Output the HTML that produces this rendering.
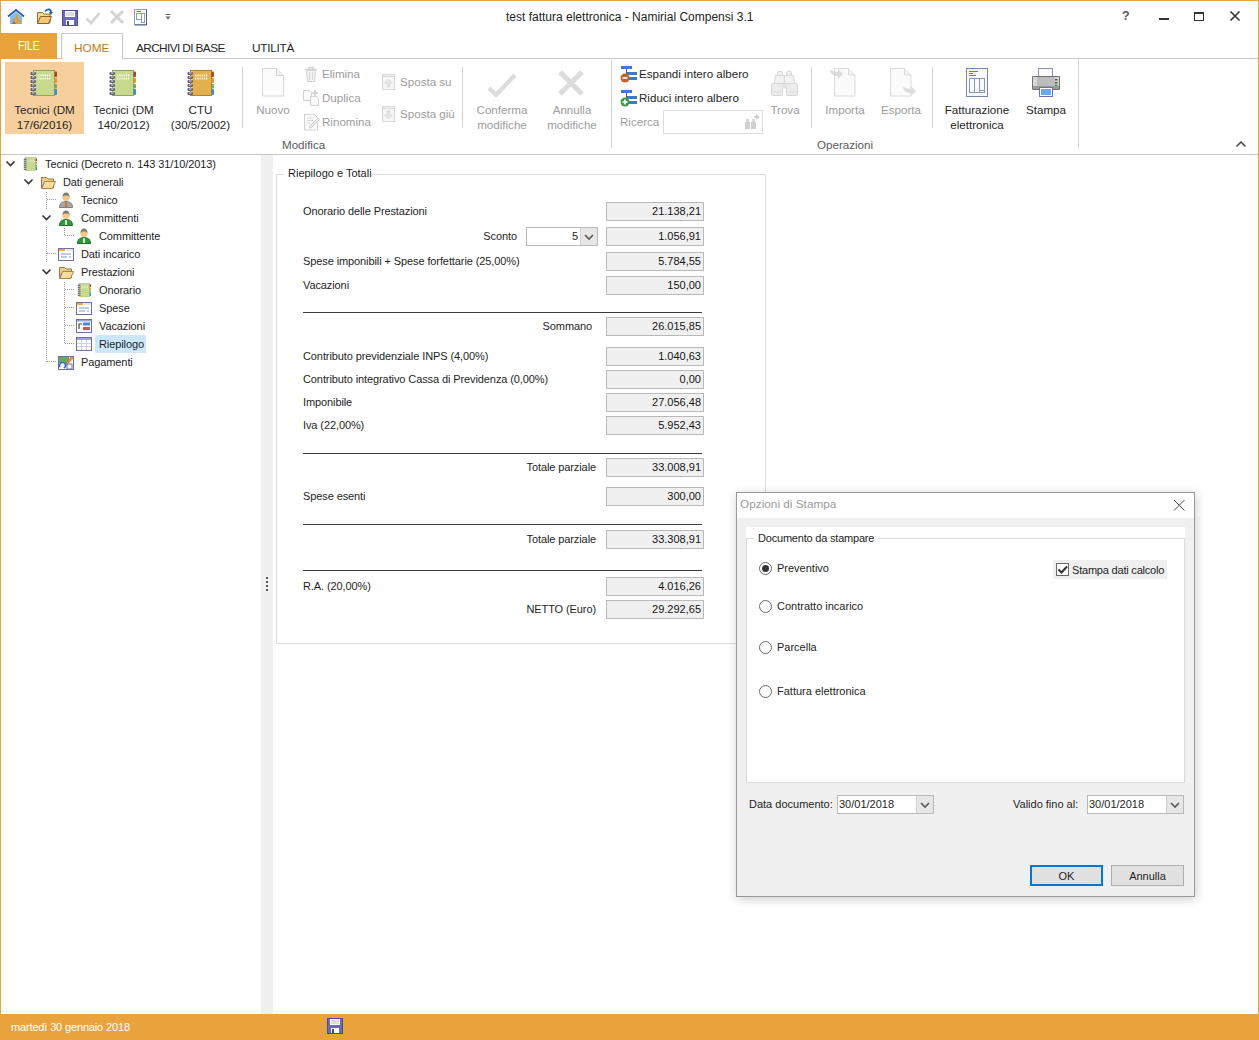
<!DOCTYPE html>
<html><head><meta charset="utf-8">
<style>
*{margin:0;padding:0;box-sizing:border-box}
html,body{width:1259px;height:1040px;overflow:hidden;background:#fff}
body{position:relative;font-family:"Liberation Sans",sans-serif;font-size:11px;color:#1e1e1e}
.a{position:absolute}
.t{position:absolute;white-space:nowrap;line-height:1}
.c{text-align:center}
.r{text-align:right}
.g{color:#a0a0a0}
.rb{font-size:11.6px;color:#262626}
.rb.g{color:#9c9c9c}
.sep{position:absolute;width:1px;background:#d2d2d2}
.fld{position:absolute;left:606px;width:98px;height:19px;background:#f0f0f0;border:1px solid #b9b9b9}
.fld span{position:absolute;right:2px;top:3px;line-height:1;font-size:11px;color:#141414}
.lbl{position:absolute;left:303px;letter-spacing:-0.1px;line-height:1;white-space:nowrap;color:#1e1e1e}
.hl{position:absolute;left:303px;width:399px;height:1px;background:#3c3c3c}
svg{position:absolute;overflow:visible}
</style></head>
<body>
<svg width="0" height="0" style="position:absolute;left:0;top:0">
<defs>
<symbol id="nb" viewBox="0 0 32 32">
<rect x="6.5" y="3.5" width="21" height="25" fill="var(--f)" stroke="var(--s)"/>
<rect x="7" y="4" width="2" height="24" fill="var(--h)"/>
<rect x="27.5" y="4.5" width="2.5" height="5.5" rx="1" fill="#b0402e"/>
<rect x="27.5" y="11" width="2.5" height="5" rx="1" fill="#e39a2a"/>
<rect x="27.5" y="17" width="2.5" height="4.5" rx="1" fill="#72b050"/>
<rect x="27.5" y="22" width="2.5" height="6" rx="1" fill="#3a8ad8"/>
<g fill="#606070"><rect x="3.5" y="5" width="5.5" height="3" rx="1"/><rect x="3.5" y="9" width="5.5" height="3" rx="1"/><rect x="3.5" y="13" width="5.5" height="3" rx="1"/><rect x="3.5" y="17" width="5.5" height="3" rx="1"/><rect x="3.5" y="21" width="5.5" height="3" rx="1"/><rect x="3.5" y="25" width="5.5" height="3" rx="1"/></g><g fill="#e8e8f0"><rect x="5" y="5.5" width="2.5" height="1"/><rect x="5" y="9.5" width="2.5" height="1"/><rect x="5" y="13.5" width="2.5" height="1"/><rect x="5" y="17.5" width="2.5" height="1"/><rect x="5" y="21.5" width="2.5" height="1"/><rect x="5" y="25.5" width="2.5" height="1"/></g>
<path d="M11 8.5h13M11 11.5h13" stroke="#fff" stroke-width="1.8" stroke-dasharray="1.3 0.9" opacity="0.9"/><path d="M11 10h14" stroke="#9fb070" stroke-width="0.8" stroke-dasharray="1 1" opacity="0.6"/>
</symbol>
<symbol id="fold" viewBox="0 0 16 16">
<path d="M1.5 3.5h5l1.5 1.5h5.5v9h-12z" fill="#e9cd8e" stroke="#9b7b3c"/>
<path d="M1.5 14.5l3-7h11l-3 7z" fill="#f7dc9c" stroke="#a88440"/>
<path d="M4 9l-2 5" stroke="#8a6cc0" stroke-width="0.8"/>
</symbol>
<symbol id="pers" viewBox="0 0 16 16">
<path d="M1.5 15.5c0-4 2.5-6 6.5-6s6.5 2 6.5 6z" fill="var(--b)" stroke="var(--bs)"/>
<circle cx="8" cy="5.5" r="3.5" fill="#f3c886"/>
<path d="M4.4 5.2c0-3 1.5-4.7 3.6-4.7s3.6 1.7 3.6 4.7c-0.6-1.2-1.4-1.8-3.6-1.8s-3 0.6-3.6 1.8z" fill="#7a7a7a"/>
<path d="M8 10v5" stroke="var(--t)" stroke-width="1.6"/>
</symbol>
<symbol id="form" viewBox="0 0 16 16">
<rect x="0.5" y="2.5" width="15" height="12" fill="#fff" stroke="#6e6ea0"/>
<rect x="1" y="3" width="6" height="2" fill="#f0a830"/>
<path d="M8 3h7v2H8z" fill="#e8e8f4"/>
<path d="M3 8h10M3 11h6M11 11h2" stroke="#7a9ad0" stroke-width="1"/>
</symbol>
<symbol id="grid" viewBox="0 0 16 16">
<rect x="0.5" y="1.5" width="15" height="13" fill="#fff" stroke="#6e6ea0"/>
<rect x="1" y="2" width="14" height="2" fill="#9aa8d8"/>
<path d="M5.5 4v10M10.5 4v10M1 7.5h14M1 10.5h14" stroke="#c8d0ea" stroke-width="1"/>
</symbol>
<symbol id="vac" viewBox="0 0 16 16">
<rect x="0.5" y="1.5" width="15" height="13" fill="#fff" stroke="#6e6ea0"/>
<rect x="1" y="2" width="14" height="1.5" fill="#9aa8d8"/>
<rect x="7" y="4.5" width="7" height="3" fill="#4a8ad8"/>
<rect x="7" y="9" width="7" height="3" fill="#c06050"/>
<path d="M3 11V6h3" stroke="#444" stroke-width="1.2" fill="none"/>
</symbol>
</defs>
</svg>
<!-- window frame -->
<div class="a" style="left:0;top:0;width:1259px;height:1px;background:#e8a33c"></div>
<div class="a" style="left:0;top:0;width:1px;height:1014px;background:#e8a33c"></div>
<div class="a" style="left:1258px;top:0;width:1px;height:1014px;background:#e8a33c"></div>

<!-- title -->
<div class="t" style="left:506px;top:11px;font-size:12px;color:#1e1e1e">test fattura elettronica - Namirial Compensi 3.1</div>

<!-- tabs -->
<div class="a" style="left:0;top:33px;width:57px;height:26px;background:#e8a33c"></div>
<div class="t" style="left:18px;top:40px;font-size:12.8px;color:#fff;transform:scaleX(0.8);transform-origin:0 0">FILE</div>
<div class="a" style="left:61px;top:33px;width:62px;height:26px;border:1px solid #c6c6c6;border-bottom:none;background:#fff"></div>
<div class="a" style="left:57px;top:58px;width:4px;height:1px;background:#c6c6c6"></div>
<div class="a" style="left:123px;top:58px;width:1135px;height:1px;background:#c6c6c6"></div>
<div class="t" style="left:74px;top:43px;font-size:11.8px;color:#c07a1e">HOME</div>
<div class="t" style="left:136px;top:43px;font-size:11.8px;color:#262626;letter-spacing:-0.6px">ARCHIVI DI BASE</div>
<div class="t" style="left:252px;top:43px;font-size:11.8px;color:#262626;letter-spacing:-0.25px">UTILITÀ</div>

<!-- ribbon bottom line -->
<div class="a" style="left:1px;top:154px;width:1257px;height:1px;background:#c6c6c6"></div>

<!-- ribbon: selected button -->
<div class="a" style="left:5px;top:62px;width:79px;height:72px;background:#f6cf9c"></div>

<!-- ribbon texts -->
<div class="t c rb" style="left:4px;width:81px;top:102px;line-height:15px">Tecnici (DM<br>17/6/2016)</div>
<div class="t c rb" style="left:83px;width:81px;top:102px;line-height:15px">Tecnici (DM<br>140/2012)</div>
<div class="t c rb" style="left:160px;width:81px;top:102px;line-height:15px">CTU<br>(30/5/2002)</div>
<div class="t c rb g" style="left:248px;width:50px;top:102px;line-height:15px">Nuovo</div>
<div class="t rb g" style="left:322px;top:68px">Elimina</div>
<div class="t rb g" style="left:322px;top:92px">Duplica</div>
<div class="t rb g" style="left:322px;top:116px">Rinomina</div>
<div class="t rb g" style="left:400px;top:76px">Sposta su</div>
<div class="t rb g" style="left:400px;top:108px">Sposta giù</div>
<div class="t c rb g" style="left:462px;width:80px;top:102px;line-height:15px">Conferma<br>modifiche</div>
<div class="t c rb g" style="left:532px;width:80px;top:102px;line-height:15px">Annulla<br>modifiche</div>
<div class="t rb" style="left:639px;top:68px">Espandi intero albero</div>
<div class="t rb" style="left:639px;top:92px">Riduci intero albero</div>
<div class="t rb g" style="left:620px;top:116px">Ricerca</div>
<div class="a" style="left:663px;top:110px;width:100px;height:24px;border:1px solid #dcdcdc;background:#fff"></div>
<div class="t c rb g" style="left:760px;width:50px;top:102px;line-height:15px">Trova</div>
<div class="t c rb g" style="left:815px;width:60px;top:102px;line-height:15px">Importa</div>
<div class="t c rb g" style="left:871px;width:60px;top:102px;line-height:15px">Esporta</div>
<div class="t c rb" style="left:937px;width:80px;top:102px;line-height:15px">Fatturazione<br>elettronica</div>
<div class="t c rb" style="left:1016px;width:60px;top:102px;line-height:15px">Stampa</div>
<div class="t rb" style="left:282px;top:139px;color:#5a5a5a">Modifica</div>
<div class="t rb" style="left:817px;top:139px;color:#5a5a5a">Operazioni</div>

<!-- separators -->
<div class="sep" style="left:242px;top:67px;height:61px"></div>
<div class="sep" style="left:462px;top:67px;height:61px"></div>
<div class="sep" style="left:611px;top:60px;height:88px"></div>
<div class="sep" style="left:811px;top:67px;height:61px"></div>
<div class="sep" style="left:932px;top:67px;height:61px"></div>
<div class="sep" style="left:1078px;top:60px;height:88px"></div>

<!-- splitter -->
<div class="a" style="left:261px;top:155px;width:12px;height:859px;background:#f0f0f0"></div>
<div class="a" style="left:266px;top:577px;width:2px;height:2px;background:#555"></div>
<div class="a" style="left:266px;top:581px;width:2px;height:2px;background:#555"></div>
<div class="a" style="left:266px;top:585px;width:2px;height:2px;background:#555"></div>
<div class="a" style="left:266px;top:589px;width:2px;height:2px;background:#555"></div>

<!-- TREE -->
<div id="tree" style="letter-spacing:-0.1px">
<div class="a" style="left:95px;top:335px;width:51px;height:18px;background:#cce8ff"></div>
<div class="t" style="left:45px;top:159px">Tecnici (Decreto n. 143 31/10/2013)</div>
<div class="t" style="left:63px;top:177px">Dati generali</div>
<div class="t" style="left:81px;top:195px">Tecnico</div>
<div class="t" style="left:81px;top:213px">Committenti</div>
<div class="t" style="left:99px;top:231px">Committente</div>
<div class="t" style="left:81px;top:249px">Dati incarico</div>
<div class="t" style="left:81px;top:267px">Prestazioni</div>
<div class="t" style="left:99px;top:285px">Onorario</div>
<div class="t" style="left:99px;top:303px">Spese</div>
<div class="t" style="left:99px;top:321px">Vacazioni</div>
<div class="t" style="left:99px;top:339px">Riepilogo</div>
<div class="t" style="left:81px;top:357px">Pagamenti</div>
<svg width="260" height="220" style="left:0;top:155px" viewBox="0 155 260 220">
<g fill="none" stroke="#333" stroke-width="1.6">
<path d="M6.5 161.5l4 4 4-4"/>
<path d="M24.5 179.5l4 4 4-4"/>
<path d="M42.5 215.5l4 4 4-4"/>
<path d="M42.5 269.5l4 4 4-4"/>
</g>
<g fill="none" stroke="#9a9a9a" stroke-width="1" stroke-dasharray="1 1">
<path d="M46.5 192v17M46.5 227v36M46.5 281v81M47 199.5h10M47 253.5h10M47 361.5h10"/>
<path d="M64.5 228v8M65 235.5h10"/>
<path d="M64.5 282v62M65 289.5h10M65 307.5h10M65 325.5h10M65 343.5h10"/>
</g>
</svg>
</div>

<!-- CONTENT groupbox -->
<div class="a" style="left:276px;top:174px;width:490px;height:470px;border:1px solid #dcdcdc"></div>
<div class="a" style="left:284px;top:170px;width:88px;height:10px;background:#fff"></div>
<div class="t" style="left:288px;top:168px">Riepilogo e Totali</div>

<div id="content">
<div class="lbl" style="top:206px">Onorario delle Prestazioni</div>
<div class="fld" style="top:202px"><span>21.138,21</span></div>
<div class="lbl r" style="left:auto;right:742px;top:231px">Sconto</div>
<div class="fld" style="top:227px"><span>1.056,91</span></div>
<div class="lbl" style="top:256px">Spese imponibili + Spese forfettarie (25,00%)</div>
<div class="fld" style="top:252px"><span>5.784,55</span></div>
<div class="lbl" style="top:280px">Vacazioni</div>
<div class="fld" style="top:276px"><span>150,00</span></div>
<div class="lbl r" style="left:auto;right:667px;top:321px">Sommano</div>
<div class="fld" style="top:317px"><span>26.015,85</span></div>
<div class="lbl" style="top:351px">Contributo previdenziale INPS (4,00%)</div>
<div class="fld" style="top:347px"><span>1.040,63</span></div>
<div class="lbl" style="top:374px">Contributo integrativo Cassa di Previdenza (0,00%)</div>
<div class="fld" style="top:370px"><span>0,00</span></div>
<div class="lbl" style="top:397px">Imponibile</div>
<div class="fld" style="top:393px"><span>27.056,48</span></div>
<div class="lbl" style="top:420px">Iva (22,00%)</div>
<div class="fld" style="top:416px"><span>5.952,43</span></div>
<div class="lbl r" style="left:auto;right:663px;top:462px">Totale parziale</div>
<div class="fld" style="top:458px"><span>33.008,91</span></div>
<div class="lbl" style="top:491px">Spese esenti</div>
<div class="fld" style="top:487px"><span>300,00</span></div>
<div class="lbl r" style="left:auto;right:663px;top:534px">Totale parziale</div>
<div class="fld" style="top:530px"><span>33.308,91</span></div>
<div class="lbl" style="top:581px">R.A. (20,00%)</div>
<div class="fld" style="top:577px"><span>4.016,26</span></div>
<div class="lbl r" style="left:auto;right:663px;top:604px">NETTO (Euro)</div>
<div class="fld" style="top:600px"><span>29.292,65</span></div>
<div class="hl" style="top:312px"></div>
<div class="hl" style="top:453px"></div>
<div class="hl" style="top:524px"></div>
<div class="hl" style="top:570px"></div>
<div class="a" style="left:526px;top:227px;width:72px;height:19px;border:1px solid #b9b9b9;background:#fff"></div>
<div class="a" style="left:580px;top:228px;width:17px;height:17px;background:#e6e6e6;border-left:1px solid #d0d0d0"></div>
<div class="t" style="left:572px;top:231px">5</div>
<svg width="10" height="8" style="left:584px;top:233px"><path d="M1 2l4 4 4-4" fill="none" stroke="#5a5a5a" stroke-width="1.7"/></svg>
</div>

<!-- status bar -->
<div class="a" style="left:0;top:1014px;width:1259px;height:26px;background:#e8a33c"></div>
<div class="t" style="left:11px;top:1022px;color:#fff;letter-spacing:-0.15px">martedì 30 gennaio 2018</div>

<div id="icons">
<!-- ribbon big notebooks -->
<svg width="32" height="32" style="left:27px;top:67px;--f:#c6d98c;--s:#8ea35e;--h:#d8e8a8"><use href="#nb"/></svg>
<svg width="32" height="32" style="left:106px;top:67px;--f:#c6d98c;--s:#8ea35e;--h:#d8e8a8"><use href="#nb"/></svg>
<svg width="32" height="32" style="left:184px;top:67px;--f:#e4b04c;--s:#b08030;--h:#f0c870"><use href="#nb"/></svg>
<!-- tree icons -->
<svg width="16" height="16" style="left:22px;top:156px;--f:#c6d98c;--s:#8ea35e;--h:#d8e8a8"><use href="#nb"/></svg>
<svg width="16" height="16" style="left:40px;top:174px"><use href="#fold"/></svg>
<svg width="16" height="16" style="left:58px;top:192px;--b:#a8a8a8;--bs:#808080;--t:#d07020"><use href="#pers"/></svg>
<svg width="16" height="16" style="left:58px;top:210px;--b:#2f9a3a;--bs:#1f7028;--t:#fff"><use href="#pers"/></svg>
<svg width="16" height="16" style="left:76px;top:228px;--b:#2f9a3a;--bs:#1f7028;--t:#fff"><use href="#pers"/></svg>
<svg width="16" height="16" style="left:58px;top:246px"><use href="#form"/></svg>
<svg width="16" height="16" style="left:58px;top:264px"><use href="#fold"/></svg>
<svg width="16" height="16" style="left:76px;top:282px;--f:#c6d98c;--s:#8ea35e;--h:#d8e8a8"><use href="#nb"/></svg>
<svg width="16" height="16" style="left:76px;top:300px"><use href="#form"/></svg>
<svg width="16" height="16" style="left:76px;top:318px"><use href="#vac"/></svg>
<svg width="16" height="16" style="left:76px;top:336px"><use href="#grid"/></svg>
<svg width="16" height="16" style="left:58px;top:354px">
<rect x="0.5" y="2.5" width="15" height="13" fill="#fff" stroke="#6e6ea0"/>
<rect x="1" y="3" width="10" height="6" fill="#6aa860"/>
<path d="M7 10l7-8 1.5 1.5-7 8z" fill="#e8a040" stroke="#805020" stroke-width="0.6"/>
<path d="M2 13a3 3 0 1 1 4 1" stroke="#2a70c8" stroke-width="1.6" fill="none"/>
<rect x="9" y="10" width="5" height="5" fill="none" stroke="#6e6ea0"/>
</svg>

<!-- QAT -->
<svg width="18" height="16" style="left:7px;top:9px">
<path d="M1 7.5L9 1l8 6.5" fill="none" stroke="#2a5db0" stroke-width="1.8"/>
<path d="M3 7.5l6-4.8 6 4.8V15H3z" fill="#8ab8e8"/>
<path d="M6 15V9h2v6zM9 15V6h2v9zM12 15v-5h2v5z" fill="#e0a030"/>
<path d="M5 15l2-3 2 3z" fill="#c06020"/>
</svg>
<svg width="18" height="16" style="left:36px;top:8px">
<path d="M1.5 4.5h5l1.5 1.5h6v9h-12.5z" fill="#f0d890" stroke="#8a7040"/>
<path d="M1.5 15.5l3-7h11l-3 7z" fill="#f6c870" stroke="#8a6030"/>
<path d="M9 3.5c2-3 6-3 6 1" fill="none" stroke="#1a60c0" stroke-width="1.6"/>
<path d="M13 4h4l-2 3z" fill="#1a60c0"/>
</svg>
<svg width="16" height="16" style="left:62px;top:10px">
<rect x="0.5" y="0.5" width="15" height="15" fill="#6a6ab8" stroke="#4a4a98"/>
<rect x="3" y="1" width="10" height="6" fill="#fff"/>
<path d="M4 3h8M4 5h8" stroke="#aaa" stroke-width="0.8"/>
<rect x="4" y="10" width="8" height="5" fill="#fff"/>
<rect x="5" y="11" width="2" height="4" fill="#4a4a98"/>
</svg>
<svg width="16" height="14" style="left:85px;top:11px"><path d="M1.5 7.5l4.5 4.5 8.5-10" fill="none" stroke="#d4d4d4" stroke-width="2.6"/></svg>
<svg width="16" height="16" style="left:109px;top:9px"><path d="M2 2l12 12M14 2L2 14" fill="none" stroke="#d4d4d4" stroke-width="3"/></svg>
<svg width="14" height="17" style="left:134px;top:9px">
<rect x="0.5" y="0.5" width="12" height="15" fill="#fff" stroke="#8a9cc4"/>
<path d="M12.5 0.5v15.5H0.5" fill="none" stroke="#4f6474"/>
<path d="M2.5 2.5h4.5" stroke="#2a80d8" stroke-width="1"/>
<rect x="2.5" y="4.5" width="5" height="6" fill="none" stroke="#8a9cc4"/>
<rect x="7.5" y="4.5" width="3" height="9" fill="none" stroke="#8a9cc4"/>
</svg>
<svg width="8" height="8" style="left:164px;top:13px"><path d="M1.5 1.5h5" stroke="#666" stroke-width="1"/><path d="M1.5 3.5h5l-2.5 3z" fill="#666"/></svg>

<!-- title buttons -->
<div class="t" style="left:1122px;top:10px;font-size:12.5px;font-weight:bold;color:#555">?</div>
<div class="a" style="left:1159px;top:18px;width:10px;height:2px;background:#333"></div>
<div class="a" style="left:1194px;top:12px;width:10px;height:9px;border:1px solid #333;border-top-width:2px"></div>
<svg width="12" height="12" style="left:1229px;top:10px"><path d="M1.5 1.5l9 9M10.5 1.5l-9 9" stroke="#333" stroke-width="1.6"/></svg>

<!-- ribbon gray icons -->
<svg width="24" height="30" style="left:262px;top:68px">
<path d="M0.5 0.5h14l7 7v20.5h-21z" fill="#fcfcfc" stroke="#d6d6d6"/>
<path d="M14.5 0.5v7h7" fill="#f0f0f0" stroke="#d6d6d6"/>
</svg>
<svg width="14" height="16" style="left:304px;top:66px">
<path d="M1 3.5h12M5 3V1.5h4V3" fill="none" stroke="#d2d2d2" stroke-width="1.4"/>
<path d="M2.5 4.5h9l-1 11h-7z" fill="#f3f3f3" stroke="#d2d2d2"/>
<path d="M5.5 6v8M8.5 6v8" stroke="#d8d8d8"/>
</svg>
<svg width="16" height="16" style="left:303px;top:90px">
<path d="M0.5 0.5h6l2 2v8h-8z" fill="#fafafa" stroke="#d2d2d2"/>
<path d="M7.5 6.5h6l2 2v7h-8z" fill="#fafafa" stroke="#d2d2d2"/>
<path d="M12 0v6M9 3h6" stroke="#d0d0d0" stroke-width="1.6"/>
</svg>
<svg width="16" height="17" style="left:304px;top:114px">
<path d="M0.5 0.5h10l3 3v12.5h-13z" fill="#fafafa" stroke="#d2d2d2"/>
<path d="M3 4h6M3 6.5h6M3 9h4" stroke="#dadada"/>
<path d="M6 12l8-8 1.5 1.5-8 8-2 .5z" fill="#eee" stroke="#cfcfcf"/>
</svg>
<svg width="14" height="16" style="left:382px;top:74px">
<rect x="0.5" y="0.5" width="12" height="15" fill="#f6f6f6" stroke="#d6d6d6"/>
<path d="M0.5 2.5h12" stroke="#d6d6d6"/>
<path d="M6.5 5l-4 4h2.5v4h3v-4h2.5z" fill="#e6e6e6" stroke="#d4d4d4" stroke-width="0.6"/>
</svg>
<svg width="14" height="16" style="left:382px;top:106px">
<rect x="0.5" y="0.5" width="12" height="15" fill="#f6f6f6" stroke="#d6d6d6"/>
<path d="M0.5 2.5h12" stroke="#d6d6d6"/>
<path d="M6.5 13l-4-4h2.5v-4h3v4h2.5z" fill="#e6e6e6" stroke="#d4d4d4" stroke-width="0.6"/>
</svg>
<svg width="30" height="26" style="left:487px;top:72px"><path d="M2 16l7 7 19-20" fill="none" stroke="#dcdcdc" stroke-width="4.2" stroke-linejoin="round"/></svg>
<svg width="28" height="28" style="left:557px;top:69px"><path d="M3 3l22 22M25 3L3 25" fill="none" stroke="#dcdcdc" stroke-width="5"/></svg>

<!-- espandi / riduci -->
<svg width="17" height="17" style="left:620px;top:66px">
<rect x="1" y="0" width="11" height="3" fill="#3a7cc8"/>
<path d="M6.5 3v5" stroke="#555" stroke-width="1"/>
<rect x="7" y="6" width="10" height="3" fill="#3a7cc8"/>
<rect x="7" y="11" width="10" height="3" fill="#3a7cc8"/>
<circle cx="5" cy="12" r="4.5" fill="#c0642a"/>
<path d="M2.5 12h5" stroke="#fff" stroke-width="1.6"/>
</svg>
<svg width="17" height="17" style="left:620px;top:90px">
<rect x="1" y="0" width="11" height="3" fill="#3a7cc8"/>
<path d="M6.5 3v5" stroke="#555" stroke-width="1"/>
<rect x="7" y="6" width="10" height="3" fill="#3a7cc8"/>
<rect x="7" y="11" width="10" height="3" fill="#3a7cc8"/>
<circle cx="5" cy="12" r="4.5" fill="#3a9a48"/>
<path d="M2.5 12h5M5 9.5v5" stroke="#fff" stroke-width="1.6"/>
</svg>
<!-- search binocs small -->
<svg width="16" height="16" style="left:744px;top:114px">
<path d="M10 3h4M12 1l2.5 2-2.5 2" stroke="#c8c8c8" stroke-width="1.4" fill="none"/>
<rect x="1" y="8" width="5" height="7" fill="#d0d0d0"/><rect x="7" y="8" width="5" height="7" fill="#d0d0d0"/>
<rect x="2" y="5" width="3" height="3" fill="#d8d8d8"/><rect x="8" y="5" width="3" height="3" fill="#d8d8d8"/>
</svg>
<!-- Trova -->
<svg width="28" height="26" style="left:771px;top:71px">
<rect x="0.5" y="12.5" width="11" height="12" rx="1.5" fill="#ececec" stroke="#d8d8d8"/>
<rect x="15.5" y="12.5" width="11" height="12" rx="1.5" fill="#ececec" stroke="#d8d8d8"/>
<rect x="11" y="12.5" width="5" height="5" fill="#e4e4e4"/>
<path d="M3.5 12.5l1-8h9l0.5 8z" fill="#f2f2f2" stroke="#d8d8d8"/>
<path d="M13 12.5l0.5-8h9l1 8z" fill="#f2f2f2" stroke="#d8d8d8"/>
<rect x="6.5" y="0.5" width="5" height="4" rx="1.5" fill="#f0f0f0" stroke="#d8d8d8"/>
<rect x="15.5" y="0.5" width="5" height="4" rx="1.5" fill="#f0f0f0" stroke="#d8d8d8"/>
<path d="M2 21h8M17 21h8" stroke="#dcdcdc"/>
</svg>
<!-- Importa -->
<svg width="28" height="30" style="left:829px;top:67px">
<path d="M5.5 1.5h14l6.5 6.5v21h-20.5z" fill="#fbfbfb" stroke="#dadada"/>
<path d="M19.5 1.5v6.5h6.5" fill="#f0f0f0" stroke="#dadada"/>
<path d="M1 3c1 5 4 6 8 6v3l5-5-5-5v3c-3 0-5-1-8-2z" fill="#dcdcdc"/>
</svg>
<!-- Esporta -->
<svg width="28" height="32" style="left:889px;top:67px">
<path d="M1.5 1.5h14l6.5 6.5v21h-20.5z" fill="#fbfbfb" stroke="#dadada"/>
<path d="M15.5 1.5v6.5h6.5" fill="#f0f0f0" stroke="#dadada"/>
<path d="M14 20c1 5 4 6 8 6v3l5-5-5-5v3c-3 0-5-1-8-2z" fill="#dcdcdc"/>
</svg>
<!-- Fatturazione -->
<svg width="23" height="30" style="left:966px;top:68px">
<rect x="0.5" y="0.5" width="21" height="28" fill="#fafafa" stroke="#7c86b6"/>
<path d="M3 3.5h9M3 5.5h4M3 7.5h7" stroke="#3a8ae0" stroke-width="1"/>
<rect x="3.5" y="10.5" width="15" height="14" fill="none" stroke="#8a96c4"/>
<path d="M8.5 10.5v14M13.5 10.5v14M13.5 22.5h5" stroke="#8a96c4" stroke-width="1"/>
</svg>
<!-- Stampa -->
<svg width="30" height="31" style="left:1031px;top:67px">
<rect x="7.5" y="1.5" width="14" height="9" fill="#fafafa" stroke="#8a90b0"/>
<path d="M1.5 9.5h27v13h-27z" fill="#d8d8d8" stroke="#707070"/>
<rect x="6" y="10" width="18" height="9" fill="#bcbcbc"/>
<rect x="2" y="19" width="26" height="3" fill="#9a9a9a"/>
<rect x="24" y="12" width="2.5" height="1.5" fill="#555"/><rect x="24" y="15" width="2.5" height="1.5" fill="#555"/><rect x="24" y="17.5" width="2.5" height="1.5" fill="#3aa040"/>
<rect x="8.5" y="20.5" width="13" height="9" fill="#fff" stroke="#7070b0"/>
<rect x="10" y="22" width="10" height="6" fill="#6aa8e8"/>
</svg>
<!-- collapse chevron -->
<svg width="12" height="8" style="left:1235px;top:140px"><path d="M1.5 6.5l4.5-4.5 4.5 4.5" fill="none" stroke="#444" stroke-width="1.5"/></svg>
<!-- status save -->
<svg width="16" height="16" style="left:327px;top:1018px">
<rect x="0.5" y="0.5" width="15" height="15" fill="#6a6ab8" stroke="#4a4a98"/>
<rect x="3" y="1" width="10" height="6" fill="#fff"/>
<path d="M4 3h8M4 5h8" stroke="#aaa" stroke-width="0.8"/>
<rect x="4" y="10" width="8" height="5" fill="#fff"/>
<rect x="5" y="11" width="2" height="4" fill="#4a4a98"/>
</svg>
</div>
<div id="dialog">
<div class="a" style="left:736px;top:492px;width:459px;height:405px;background:#f0f0f0;border:1px solid #999;box-shadow:1px 2px 10px rgba(0,0,0,0.2)"></div>
<div class="a" style="left:737px;top:493px;width:457px;height:25px;background:#fff"></div>
<div class="t" style="left:740px;top:499px;font-size:11.8px;color:#9b9b9b">Opzioni di Stampa</div>
<svg width="12" height="12" style="left:1173px;top:499px"><path d="M1 1l10.5 10.5M11.5 1L1 11.5" stroke="#4a4a4a" stroke-width="1" fill="none"/></svg>
<div class="a" style="left:746px;top:527px;width:439px;height:256px;background:#fff"></div>
<div class="a" style="left:746px;top:538px;width:439px;height:245px;border:1px solid #dcdcdc"></div>
<div class="a" style="left:754px;top:534px;width:124px;height:8px;background:#fff"></div>
<div class="t" style="left:758px;top:533px;letter-spacing:-0.2px">Documento da stampare</div>
<!-- radios -->
<div class="a" style="left:759px;top:562px;width:13px;height:13px;border-radius:50%;border:1px solid #6a6a6a;background:#fff"></div>
<div class="a" style="left:762px;top:565px;width:7px;height:7px;border-radius:50%;background:#333"></div>
<div class="t" style="left:777px;top:563px">Preventivo</div>
<div class="a" style="left:759px;top:600px;width:13px;height:13px;border-radius:50%;border:1px solid #6a6a6a;background:#fff"></div>
<div class="t" style="left:777px;top:601px">Contratto incarico</div>
<div class="a" style="left:759px;top:641px;width:13px;height:13px;border-radius:50%;border:1px solid #6a6a6a;background:#fff"></div>
<div class="t" style="left:777px;top:642px">Parcella</div>
<div class="a" style="left:759px;top:685px;width:13px;height:13px;border-radius:50%;border:1px solid #6a6a6a;background:#fff"></div>
<div class="t" style="left:777px;top:686px">Fattura elettronica</div>
<!-- checkbox -->
<div class="a" style="left:1053px;top:560px;width:114px;height:19px;background:#efefef"></div>
<div class="a" style="left:1056px;top:563px;width:13px;height:13px;border:1px solid #6a6a6a;background:#fff"></div>
<svg width="13" height="13" style="left:1056px;top:563px"><path d="M2.5 6.5l3 3 5.5-6" stroke="#333" stroke-width="2" fill="none"/></svg>
<div class="t" style="left:1072px;top:565px;letter-spacing:-0.2px">Stampa dati calcolo</div>
<!-- dates -->
<div class="t" style="left:749px;top:799px">Data documento:</div>
<div class="a" style="left:837px;top:795px;width:97px;height:19px;border:1px solid #b9b9b9;background:#fff"></div>
<div class="a" style="left:916px;top:796px;width:17px;height:17px;background:#e6e6e6;border-left:1px solid #d0d0d0"></div>
<svg width="10" height="8" style="left:920px;top:801px"><path d="M1 2l4 4 4-4" fill="none" stroke="#5a5a5a" stroke-width="1.7"/></svg>
<div class="t" style="left:839px;top:799px">30/01/2018</div>
<div class="t" style="left:1013px;top:799px">Valido fino al:</div>
<div class="a" style="left:1087px;top:795px;width:97px;height:19px;border:1px solid #b9b9b9;background:#fff"></div>
<div class="a" style="left:1166px;top:796px;width:17px;height:17px;background:#e6e6e6;border-left:1px solid #d0d0d0"></div>
<svg width="10" height="8" style="left:1170px;top:801px"><path d="M1 2l4 4 4-4" fill="none" stroke="#5a5a5a" stroke-width="1.7"/></svg>
<div class="t" style="left:1089px;top:799px">30/01/2018</div>
<!-- buttons -->
<div class="a" style="left:1030px;top:865px;width:73px;height:21px;background:#e1e1e1;border:2px solid #0078d7"></div>
<div class="t c" style="left:1030px;width:73px;top:871px">OK</div>
<div class="a" style="left:1111px;top:865px;width:73px;height:21px;background:#e1e1e1;border:1px solid #adadad"></div>
<div class="t c" style="left:1111px;width:73px;top:871px">Annulla</div>
</div>
</body></html>
